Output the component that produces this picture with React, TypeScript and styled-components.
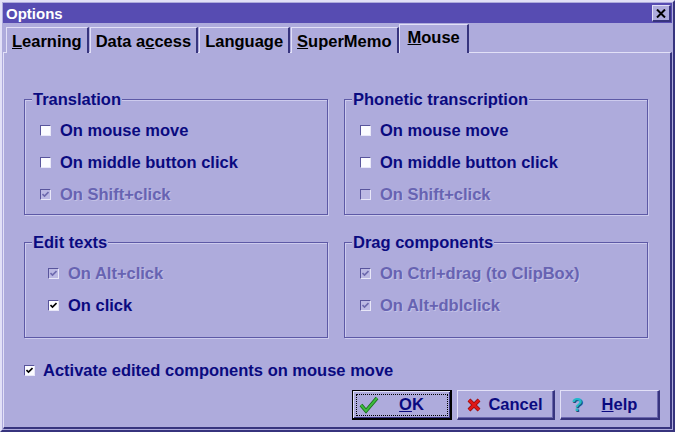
import styled, { createGlobalStyle } from "styled-components";

const PANEL = "#aeabdc";
const LIGHT = "#e2e0f7";
const DARK = "#37347e";
const NAVY = "#0a0a80";
const DIM = "#6763b2";

const GlobalStyle = createGlobalStyle`
  * { box-sizing: border-box; }
  html, body { margin: 0; padding: 0; background: ${PANEL}; }
  body {
    font-family: "Liberation Sans", Arial, sans-serif;
    font-weight: bold;
    font-size: 16.5px;
  }
`;

type Item = { label: string; checked?: boolean; disabled?: boolean };

const groups: { title: string; height: number; indent?: number; items: Item[] }[] = [
  {
    title: "Translation",
    height: 116,
    items: [
      { label: "On mouse move" },
      { label: "On middle button click" },
      { label: "On Shift+click", checked: true, disabled: true },
    ],
  },
  {
    title: "Phonetic transcription",
    height: 116,
    items: [
      { label: "On mouse move" },
      { label: "On middle button click" },
      { label: "On Shift+click", disabled: true },
    ],
  },
  {
    title: "Edit texts",
    height: 96,
    indent: 8,
    items: [
      { label: "On Alt+click", checked: true, disabled: true },
      { label: "On click", checked: true },
    ],
  },
  {
    title: "Drag components",
    height: 96,
    items: [
      { label: "On Ctrl+drag (to ClipBox)", checked: true, disabled: true },
      { label: "On Alt+dblclick", checked: true, disabled: true },
    ],
  },
];

const Window = styled.div`
  width: 675px;
  height: 432px;
  display: flex;
  flex-direction: column;
  padding: 1px;
  background: ${PANEL};
  border-top: 2px solid ${LIGHT};
  border-left: 2px solid ${LIGHT};
  border-right: 2px solid ${DARK};
  border-bottom: 2px solid ${DARK};
`;

const TitleBar = styled.div`
  height: 20px;
  background: #574cb2;
  display: flex;
  align-items: center;
  justify-content: space-between;
  padding: 1px 1px 0 3px;
  color: #fff;
  font-size: 15px;
`;

const CloseButton = styled.div`
  width: 19px;
  height: 17px;
  background: ${PANEL};
  border-top: 1px solid ${LIGHT};
  border-left: 1px solid ${LIGHT};
  border-right: 2px solid ${DARK};
  border-bottom: 2px solid ${DARK};
  display: flex;
  align-items: center;
  justify-content: center;
`;

const TabStrip = styled.div`
  display: flex;
  align-items: flex-end;
  height: 30px;
  padding-left: 2px;
  position: relative;
  z-index: 1;
  margin-bottom: -1px;
`;

const Tab = styled.div<{ $active?: boolean }>`
  height: ${(p) => (p.$active ? 29 : 26)}px;
  padding: ${(p) => (p.$active ? "2px 7px 0 8px" : "3px 5px 0 5px")};
  margin-left: ${(p) => (p.$active ? 0 : 1)}px;
  background: ${PANEL};
  color: #000;
  border-top: 1px solid ${LIGHT};
  border-left: 1px solid ${LIGHT};
  border-right: 2px solid ${DARK};
  line-height: 20px;
  white-space: nowrap;
`;

const Sheet = styled.div`
  flex: 1;
  display: flex;
  flex-direction: column;
  padding: 37px 10px 4px 20px;
  border-top: 1px solid ${LIGHT};
  border-left: 1px solid ${LIGHT};
  border-right: 2px solid ${DARK};
  border-bottom: 2px solid ${DARK};
`;

const Groups = styled.div`
  display: grid;
  grid-template-columns: 1fr 1fr;
  column-gap: 16px;
  row-gap: 18px;
  margin-right: 12px;
`;

const GroupBox = styled.div<{ $height: number; $indent: number }>`
  margin-top: 9px;
  height: ${(p) => p.$height}px;
  border: 1px solid #5d59a6;
  box-shadow: inset 1px 1px 0 #cdcbee, 1px 1px 0 #cdcbee;
  padding: 0 6px 4px ${(p) => 15 + p.$indent}px;
`;

const Legend = styled.div<{ $indent: number }>`
  width: fit-content;
  margin: -10px 0 6px ${(p) => -8 - p.$indent}px;
  padding: 0 1px;
  line-height: 18px;
  background: ${PANEL};
  color: ${NAVY};
  white-space: nowrap;
`;

const CheckRow = styled.div<{ $disabled?: boolean; $height?: number }>`
  height: ${(p) => p.$height ?? 32}px;
  display: flex;
  align-items: center;
  gap: 9px;
  color: ${(p) => (p.$disabled ? DIM : NAVY)};
  text-shadow: ${(p) => (p.$disabled ? "1px 1px 0 rgba(235,234,250,0.35)" : "none")};
  white-space: nowrap;
`;

const Box = styled.span<{ $disabled?: boolean }>`
  width: 11px;
  height: 11px;
  flex: none;
  display: flex;
  align-items: center;
  justify-content: center;
  background: ${(p) => (p.$disabled ? "#bcb9e4" : "#fbfbff")};
  border-top: 1px solid #58549c;
  border-left: 1px solid #58549c;
  border-right: 1px solid #e8e7f8;
  border-bottom: 1px solid #e8e7f8;
`;

const ActivateRow = styled(CheckRow)`
  margin-top: 22px;
  gap: 8px;
`;

const Buttons = styled.div`
  display: flex;
  justify-content: flex-end;
  gap: 5px;
  margin-top: 10px;
`;

const Button = styled.div<{ $width: number; $default?: boolean }>`
  width: ${(p) => p.$width}px;
  height: 30px;
  display: flex;
  align-items: center;
  padding-left: 6px;
  color: ${NAVY};
  background: ${PANEL};
  border-top: 1px solid ${(p) => (p.$default ? "#000" : LIGHT)};
  border-left: 1px solid ${(p) => (p.$default ? "#000" : LIGHT)};
  border-right: 2px solid ${(p) => (p.$default ? "#000" : DARK)};
  border-bottom: 2px solid ${(p) => (p.$default ? "#000" : DARK)};
  box-shadow: ${(p) =>
    p.$default
      ? `inset 1px 1px 0 ${LIGHT}, inset -1px -1px 0 ${DARK}`
      : `inset -1px -1px 0 #6a66ae`};
  outline: ${(p) => (p.$default ? "1px dotted #000" : "none")};
  outline-offset: -5px;
`;

const ButtonIcon = styled.span`
  width: 20px;
  height: 20px;
  flex: none;
  display: flex;
  align-items: center;
  justify-content: center;
`;

const ButtonLabel = styled.span`
  flex: 1;
  text-align: center;
  padding-right: 6px;
`;

const Question = styled.span`
  color: #22b6cc;
  font-size: 19px;
  text-shadow: 1px 1px 0 #1e4f7a;
`;

const CheckMark = ({ color }: { color: string }) => (
  <svg width="7" height="7" viewBox="0 0 7 7">
    <path d="M0.5 3 L2.5 5 L6.5 1" fill="none" stroke={color} strokeWidth="1.6" />
  </svg>
);

const Checkbox = ({ item, height }: { item: Item; height?: number }) => (
  <CheckRow $disabled={item.disabled} $height={height}>
    <Box $disabled={item.disabled}>
      {item.checked && <CheckMark color={item.disabled ? "#6e6aae" : "#000"} />}
    </Box>
    <span>{item.label}</span>
  </CheckRow>
);

export default function App() {
  return (
    <>
      <GlobalStyle />
      <Window>
        <TitleBar>
          <span>Options</span>
          <CloseButton>
            <svg width="10" height="9" viewBox="0 0 10 9">
              <path d="M1 0.5 L9 8.5 M9 0.5 L1 8.5" stroke="#000" strokeWidth="2" />
            </svg>
          </CloseButton>
        </TitleBar>
        <TabStrip>
          <Tab>
            <u>L</u>earning
          </Tab>
          <Tab>
            Data a<u>c</u>cess
          </Tab>
          <Tab>Language</Tab>
          <Tab>
            <u>S</u>uperMemo
          </Tab>
          <Tab $active>
            <u>M</u>ouse
          </Tab>
        </TabStrip>
        <Sheet>
          <Groups>
            {groups.map((g) => (
              <GroupBox key={g.title} $height={g.height} $indent={g.indent ?? 0}>
                <Legend $indent={g.indent ?? 0}>{g.title}</Legend>
                {g.items.map((it) => (
                  <Checkbox key={it.label} item={it} />
                ))}
              </GroupBox>
            ))}
          </Groups>
          <ActivateRow $height={20}>
            <Box>
              <CheckMark color="#000" />
            </Box>
            <span>Activate edited components on mouse move</span>
          </ActivateRow>
          <Buttons>
            <Button $width={100} $default>
              <ButtonIcon>
                <svg width="20" height="18" viewBox="0 0 20 18">
                  <path d="M2 9 L7 15 L18 2" fill="none" stroke="#1a6a1a" strokeWidth="3.6" />
                  <path d="M2 9 L7 15 L18 2" fill="none" stroke="#3cbc3c" strokeWidth="2" />
                </svg>
              </ButtonIcon>
              <ButtonLabel>
                <u>O</u>K
              </ButtonLabel>
            </Button>
            <Button $width={98}>
              <ButtonIcon>
                <svg width="14" height="14" viewBox="0 0 14 14">
                  <path d="M2 2 L12 12 M12 2 L2 12" stroke="#8a0a0a" strokeWidth="4" />
                  <path d="M2 2 L12 12 M12 2 L2 12" stroke="#e01818" strokeWidth="2.6" />
                </svg>
              </ButtonIcon>
              <ButtonLabel>Cancel</ButtonLabel>
            </Button>
            <Button $width={100}>
              <ButtonIcon>
                <Question>?</Question>
              </ButtonIcon>
              <ButtonLabel>
                <u>H</u>elp
              </ButtonLabel>
            </Button>
          </Buttons>
        </Sheet>
      </Window>
    </>
  );
}
